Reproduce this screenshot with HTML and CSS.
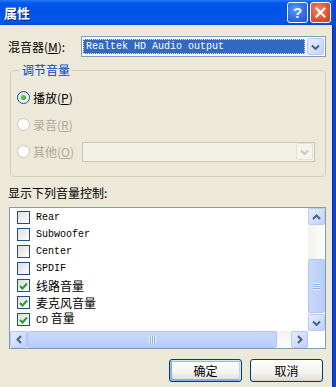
FILE: index.html
```html
<!DOCTYPE html>
<html lang="zh-CN">
<head>
  <meta charset="UTF-8" />
  <title>属性</title>
  <link rel="stylesheet" href="styles.css">
</head>
<body>
  <div class="window">
    <div class="titlebar">
      <span class="title">属性</span>
      <div class="title-buttons">
        <span class="tbtn tbtn-help">?</span>
        <span class="tbtn tbtn-close">
          <svg width="11" height="11" viewBox="0 0 11 11"><path d="M1.5 1.5 L9.5 9.5 M9.5 1.5 L1.5 9.5" stroke="#fff" stroke-width="2.2" stroke-linecap="square"/></svg>
        </span>
      </div>
    </div>

    <div class="client">
      <div class="mixer-row">
        <span class="mixer-label">混音器(<u>M</u>):</span>
        <div class="combo">
          <div class="combo-value"><span class="focus-box">Realtek HD Audio output</span></div>
          <span class="drop-btn">
            <svg width="9" height="6" viewBox="0 0 9 6"><polyline points="1,1.5 4.5,5 8,1.5" fill="none" stroke="#4d6185" stroke-width="2"/></svg>
          </span>
        </div>
      </div>

      <fieldset class="group">
        <legend>调节音量</legend>
        <div class="radio-row">
          <span class="radio checked"></span>
          <span>播放(<u>P</u>)</span>
        </div>
        <div class="radio-row disabled">
          <span class="radio"></span>
          <span>录音(<u>R</u>)</span>
        </div>
        <div class="radio-row disabled">
          <span class="radio"></span>
          <span>其他(<u>O</u>)</span>
          <div class="combo combo-disabled">
            <div class="combo-value"></div>
            <span class="drop-btn">
              <svg width="9" height="6" viewBox="0 0 9 6"><polyline points="1,1.5 4.5,5 8,1.5" fill="none" stroke="#c9c7ba" stroke-width="2"/></svg>
            </span>
          </div>
        </div>
      </fieldset>

      <div class="list-label">显示下列音量控制:</div>

      <div class="listbox">
        <div class="items">
          <div class="item"><span class="check"></span><span class="mono">Rear</span></div>
          <div class="item"><span class="check"></span><span class="mono">Subwoofer</span></div>
          <div class="item"><span class="check"></span><span class="mono">Center</span></div>
          <div class="item"><span class="check"></span><span class="mono">SPDIF</span></div>
          <div class="item"><span class="check on"><svg width="9" height="8" viewBox="0 0 9 8"><polyline points="1,4 3.5,6.5 8,1.5" fill="none" stroke="#21a121" stroke-width="2"/></svg></span><span>线路音量</span></div>
          <div class="item"><span class="check on"><svg width="9" height="8" viewBox="0 0 9 8"><polyline points="1,4 3.5,6.5 8,1.5" fill="none" stroke="#21a121" stroke-width="2"/></svg></span><span>麦克风音量</span></div>
          <div class="item"><span class="check on"><svg width="9" height="8" viewBox="0 0 9 8"><polyline points="1,4 3.5,6.5 8,1.5" fill="none" stroke="#21a121" stroke-width="2"/></svg></span><span><span class="mono">CD</span> 音量</span></div>
        </div>

        <div class="vscroll">
          <span class="sbtn">
            <svg width="9" height="6" viewBox="0 0 9 6"><polyline points="1,5 4.5,1.5 8,5" fill="none" stroke="#4d6185" stroke-width="2"/></svg>
          </span>
          <div class="vtrack">
            <div class="vthumb"><span class="grip-h"></span></div>
          </div>
          <span class="sbtn">
            <svg width="9" height="6" viewBox="0 0 9 6"><polyline points="1,1.5 4.5,5 8,1.5" fill="none" stroke="#4d6185" stroke-width="2"/></svg>
          </span>
        </div>

        <div class="hscroll">
          <span class="sbtn">
            <svg width="6" height="9" viewBox="0 0 6 9"><polyline points="5,1 1.5,4.5 5,8" fill="none" stroke="#4d6185" stroke-width="2"/></svg>
          </span>
          <div class="htrack">
            <div class="hthumb"><span class="grip-v"></span></div>
          </div>
          <span class="sbtn">
            <svg width="6" height="9" viewBox="0 0 6 9"><polyline points="1,1 4.5,4.5 1,8" fill="none" stroke="#4d6185" stroke-width="2"/></svg>
          </span>
        </div>
        <div class="corner"></div>
      </div>

      <div class="btn-row">
        <button class="btn btn-default">确定</button>
        <button class="btn">取消</button>
      </div>
    </div>
  </div>
</body>
</html>
```

FILE: styles.css
```css
body {
  margin: 0;
  width: 336px;
  height: 387px;
  overflow: hidden;
  background: #ece9d8;
  font-family: "Noto Sans CJK SC", "Liberation Sans", sans-serif;
  font-size: 12px;
  line-height: 14px;
  color: #000;
}
u {
  text-decoration: underline;
  text-underline-offset: 1px;
}
.mono {
  font-family: "Liberation Mono", monospace;
  font-size: 10px;
}
.window {
  width: 336px;
  height: 387px;
  box-sizing: border-box;
  border-right: 3px solid #0a44d6;
  box-shadow: inset -1px 0 #0b2fa8;
  display: flex;
  flex-direction: column;
}

/* title bar */
.titlebar {
  height: 25px;
  flex: none;
  display: flex;
  align-items: center;
  justify-content: space-between;
  padding: 0 2px 0 4px;
  background: linear-gradient(to bottom, #2a7af6 0%, #0058ee 12%, #0053e6 45%, #0459ec 85%, #0048d8 100%);
}
.title {
  color: #fff;
  font-weight: bold;
  font-size: 13px;
  text-shadow: 1px 1px #0f1a8f;
}
.title-buttons {
  display: flex;
  gap: 2px;
}
.tbtn {
  width: 19px;
  height: 19px;
  border: 1px solid #fff;
  border-radius: 3px;
  display: flex;
  align-items: center;
  justify-content: center;
  color: #fff;
  font-family: "Liberation Sans", sans-serif;
  font-weight: bold;
  font-size: 15px;
}
.tbtn-help {
  background: radial-gradient(circle at 40% 35%, #5d9bff 0%, #2a6ff0 55%, #1b55d6 100%);
}
.tbtn-close {
  background: radial-gradient(circle at 40% 35%, #f08a6a 0%, #e2532d 55%, #c8401f 100%);
}

.client {
  flex: 1;
  padding-left: 8px;
}

/* mixer row */
.mixer-row {
  margin-top: 11px;
  display: flex;
  align-items: center;
  height: 21px;
}
.mixer-label {
  width: 73px;
}
.combo {
  width: 245px;
  height: 21px;
  box-sizing: border-box;
  border: 1px solid #7f9db9;
  background: #fff;
  display: flex;
  align-items: center;
  padding: 1px;
  gap: 2px;
}
.combo-value {
  flex: 1;
  height: 15px;
  background: #316ac5;
  color: #fff;
  display: flex;
}
.focus-box {
  flex: 1;
  border: 1px dotted #f2e39a;
  padding-left: 2px;
  font-family: "Liberation Mono", monospace;
  font-size: 10px;
  line-height: 13px;
}
.drop-btn {
  width: 15px;
  height: 15px;
  border: 1px solid #b9cbf3;
  border-radius: 2px;
  background: linear-gradient(135deg, #e6eefc, #c3d3fa);
  display: flex;
  align-items: center;
  justify-content: center;
}

/* group box */
.group {
  margin: 6px 0 0 2px;
  width: 316px;
  box-sizing: border-box;
  border: 1px solid #d0d0bf;
  border-radius: 4px;
  padding: 12px 10px 16px 6px;
  display: flex;
  flex-direction: column;
  gap: 10px;
}
.group legend {
  color: #0046d5;
  padding: 0 2px;
  margin-left: 3px;
}
.radio-row {
  display: flex;
  align-items: center;
  height: 17px;
  gap: 3px;
}
.radio-row.disabled {
  color: #aca899;
}
.radio {
  width: 11px;
  height: 11px;
  border: 1px solid #1c5180;
  border-radius: 50%;
  background: linear-gradient(135deg, #dcdcd7, #fff);
  position: relative;
}
.radio.checked::after {
  content: "";
  position: absolute;
  left: 3px;
  top: 3px;
  width: 5px;
  height: 5px;
  border-radius: 50%;
  background: radial-gradient(circle at 40% 40%, #5ad75a, #1e9a1e);
}
.disabled .radio {
  border-color: #cac8bb;
  background: #fff;
}
.combo-disabled {
  width: 233px;
  height: 20px;
  margin-left: auto;
  border-color: #c9c7ba;
  background: #f3f1e6;
}
.combo-disabled .combo-value {
  background: none;
}
.combo-disabled .drop-btn {
  border-color: #e3e1d6;
  background: #f4f3ee;
}

/* list */
.list-label {
  margin-top: 9px;
}
.listbox {
  margin: 7px 0 0 1px;
  width: 317px;
  height: 142px;
  box-sizing: border-box;
  border: 1px solid #7f9db9;
  background: #fff;
  display: grid;
  grid-template-columns: 1fr 17px;
  grid-template-rows: 1fr 17px;
}
.items {
  padding: 1px 0 0 7px;
  overflow: hidden;
}
.item {
  height: 17px;
  display: flex;
  align-items: center;
  gap: 6px;
}
.check {
  width: 11px;
  height: 11px;
  border: 1px solid #1c5180;
  background: linear-gradient(135deg, #dcdcd7, #fff);
  display: flex;
  align-items: center;
  justify-content: center;
}

/* scrollbars */
.sbtn {
  width: 15px;
  height: 15px;
  border: 1px solid #b7caf5;
  border-radius: 2px;
  background: linear-gradient(135deg, #e6eefc, #bfd1f9);
  display: flex;
  align-items: center;
  justify-content: center;
  flex: none;
}
.vscroll {
  display: flex;
  flex-direction: column;
  background: linear-gradient(to right, #f3f1ec, #fefefb);
}
.vtrack {
  flex: 1;
  padding-top: 34px;
  padding-bottom: 1px;
  display: flex;
}
.vthumb {
  flex: 1;
  border: 1px solid #b1c6f7;
  border-radius: 2px;
  background: linear-gradient(to right, #cad8fc, #b9cdf9);
  display: flex;
  align-items: center;
  justify-content: center;
}
.grip-h {
  width: 7px;
  height: 7px;
  background: repeating-linear-gradient(to bottom, #eef4fe 0 1px, #8cb0f8 1px 2px);
}
.hscroll {
  display: flex;
  background: linear-gradient(to bottom, #f3f1ec, #fefefb);
}
.htrack {
  flex: 1;
  padding-right: 14px;
  display: flex;
}
.hthumb {
  flex: 1;
  border: 1px solid #b1c6f7;
  border-radius: 2px;
  background: linear-gradient(to bottom, #cad8fc, #b9cdf9);
  display: flex;
  align-items: center;
  justify-content: center;
}
.grip-v {
  width: 7px;
  height: 7px;
  background: repeating-linear-gradient(to right, #eef4fe 0 1px, #8cb0f8 1px 2px);
}
.corner {
  background: #fff;
}

/* dialog buttons */
.btn-row {
  margin-top: 10px;
  padding-right: 10px;
  display: flex;
  justify-content: flex-end;
  gap: 8px;
}
.btn {
  width: 73px;
  height: 23px;
  border: 1px solid #003c74;
  border-radius: 3px;
  background: linear-gradient(to bottom, #fff 0%, #f3f2ee 60%, #e6e3da 90%, #d6d0c5 100%);
  font-family: "Noto Sans CJK SC", sans-serif;
  font-size: 12px;
  padding: 0;
  color: #000;
}
.btn-default {
  box-shadow: inset -1px 1px #cee7ff, inset 1px 2px #98b8ea, inset -2px 2px #bcd4f6, inset 1px -1px #89ade4, inset 2px -2px #89ade4;
}
```
